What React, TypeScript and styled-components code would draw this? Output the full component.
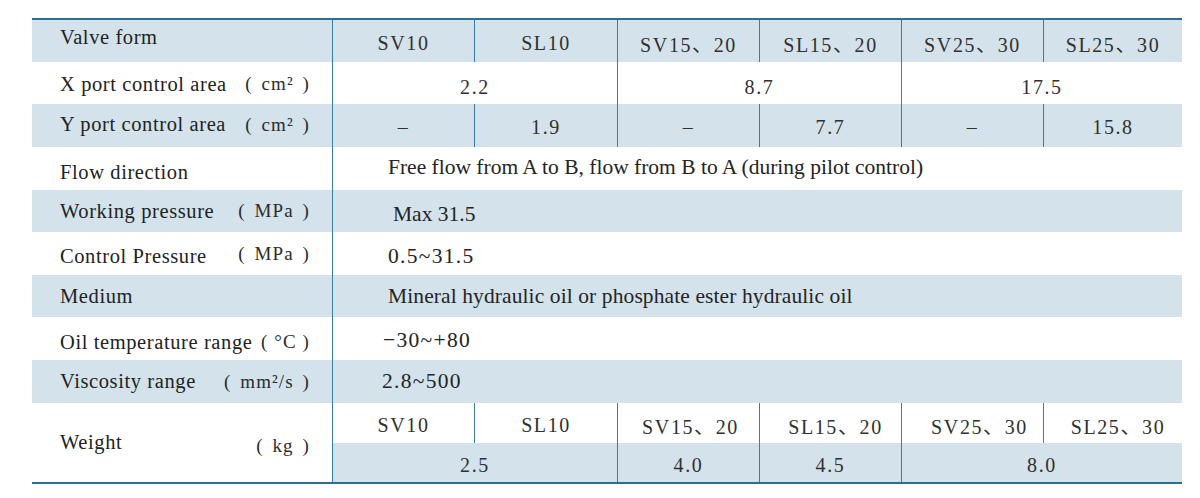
import React from "react";
import styled, { createGlobalStyle } from "styled-components";

const Global = createGlobalStyle`
  html, body { margin: 0; padding: 0; background: #ffffff; }
  body { font-family: "Liberation Serif", "Times New Roman", "Noto Sans CJK SC", serif; color: #2a2a2a; }
`;

const Page = styled.div`
  width: 1200px;
  height: 498px;
  box-sizing: border-box;
  padding: 18px 0 0 32px;
  background: #ffffff;
`;

const Table = styled.div`
  display: grid;
  width: 1150px;
  grid-template-columns: 300px 142px 143px 142px 142px 142px 139px;
  grid-template-rows: 42px 42px 43px 43px 42px 43px 42px 43px 43px 40px 39px;
  border-top: 2px solid #2b6e96;
  border-bottom: 2px solid #2b6e96;
`;

type CellProps = {
  $shade?: boolean;
  $span?: number;
  $rows?: number;
  $dy?: number;
  $dx?: number;
  $ls?: number;
};

const shift = (p: CellProps) => {
  const dy = p.$dy ?? 0;
  return `padding-top: ${Math.max(0, dy * 2)}px; padding-bottom: ${Math.max(0, -dy * 2)}px;`;
};

const LabelCell = styled.div<CellProps>`
  grid-column: 1;
  grid-row: span ${(p) => p.$rows ?? 1};
  display: flex;
  align-items: center;
  justify-content: space-between;
  box-sizing: border-box;
  padding-left: 28px;
  padding-right: 22px;
  ${shift}
  background: ${(p) => (p.$shade ? "#d4e2ec" : "#ffffff")};
  font-size: 20.5px;
  letter-spacing: 0.6px;
  color: #222222;
  white-space: nowrap;
`;

const Unit = styled.span<{ $dy?: number; $tight?: boolean }>`
  font-size: 19px;
  letter-spacing: 1.1px;
  word-spacing: ${(p) => (p.$tight ? 0 : 3)}px;
  color: #2c2c2c;
  position: relative;
  top: ${(p) => p.$dy ?? 0}px;
`;

const ValueCell = styled.div<CellProps>`
  grid-column: span ${(p) => p.$span ?? 1};
  display: flex;
  align-items: center;
  justify-content: center;
  box-sizing: border-box;
  border-left: 1px solid #3a7ea6;
  ${shift}
  padding-left: ${(p) => (p.$dx ?? 0) * 2}px;
  background: ${(p) => (p.$shade ? "#d4e2ec" : "#ffffff")};
  font-size: 20px;
  letter-spacing: 1.6px;
  color: #303030;
  white-space: nowrap;
`;

const TextCell = styled.div<CellProps>`
  grid-column: span 6;
  display: flex;
  align-items: center;
  box-sizing: border-box;
  border-left: 1px solid #3a7ea6;
  ${shift}
  padding-left: ${(p) => p.$dx ?? 55}px;
  background: ${(p) => (p.$shade ? "#d4e2ec" : "#ffffff")};
  font-size: 21.5px;
  letter-spacing: ${(p) => p.$ls ?? 0}px;
  color: #242424;
  white-space: nowrap;
`;

const models = ["SV10", "SL10", "SV15、20", "SL15、20", "SV25、30", "SL25、30"];

type Spec = {
  label: string;
  unit?: string;
  tight?: boolean;
  ldy?: number;
  udy?: number;
  text: string;
  tdy?: number;
  tdx?: number;
  ls?: number;
  shade: boolean;
};

const specs: Spec[] = [
  { label: "Flow direction", ldy: 4, text: "Free flow from A to B, flow from B to A (during pilot control)", tdy: -1.5, shade: false },
  { label: "Working pressure", unit: "( MPa )", text: "Max 31.5", tdy: 3.5, tdx: 60, shade: true },
  { label: "Control Pressure", unit: "( MPa )", ldy: 3, udy: -3, text: "0.5~31.5", tdy: 3, ls: 1.3, shade: false },
  { label: "Medium", text: "Mineral hydraulic oil or phosphate ester hydraulic oil", ls: 0.1, shade: true },
  { label: "Oil temperature range", unit: "( °C )", tight: true, ldy: 3.5, text: "−30~+80", tdy: 1.5, tdx: 50, ls: 1.3, shade: false },
  { label: "Viscosity range", unit: "( mm²/s )", text: "2.8~500", tdx: 49, ls: 1.3, shade: true },
];

const weightTopDx = [0, 0, 2, 5, 7, 5];

export default function App() {
  return (
    <>
      <Global />
      <Page>
        <Table>
          <LabelCell $shade $dy={-4}>
            <span>Valve form</span>
          </LabelCell>
          {models.map((m) => (
            <ValueCell key={m} $shade $dy={2}>
              {m}
            </ValueCell>
          ))}

          <LabelCell $dy={1}>
            <span>X port control area</span>
            <Unit>( cm² )</Unit>
          </LabelCell>
          <ValueCell $span={2} $dy={4.5}>2.2</ValueCell>
          <ValueCell $span={2} $dy={4.5}>8.7</ValueCell>
          <ValueCell $span={2} $dy={4.5}>17.5</ValueCell>

          <LabelCell $shade $dy={-1}>
            <span>Y port control area</span>
            <Unit>( cm² )</Unit>
          </LabelCell>
          {["–", "1.9", "–", "7.7", "–", "15.8"].map((v, i) => (
            <ValueCell key={i} $shade $dy={2}>
              {v}
            </ValueCell>
          ))}

          {specs.map((s) => (
            <React.Fragment key={s.label}>
              <LabelCell $shade={s.shade} $dy={s.ldy}>
                <span>{s.label}</span>
                {s.unit && (
                  <Unit $dy={s.udy} $tight={s.tight}>
                    {s.unit}
                  </Unit>
                )}
              </LabelCell>
              <TextCell $shade={s.shade} $dy={s.tdy} $dx={s.tdx} $ls={s.ls}>
                {s.text}
              </TextCell>
            </React.Fragment>
          ))}

          <LabelCell $rows={2}>
            <span>Weight</span>
            <Unit $dy={3}>( kg )</Unit>
          </LabelCell>
          {models.map((m, i) => (
            <ValueCell key={"w" + m} $dy={2} $dx={weightTopDx[i]}>
              {m}
            </ValueCell>
          ))}
          <ValueCell $shade $span={2} $dy={3}>2.5</ValueCell>
          <ValueCell $shade $dy={3}>4.0</ValueCell>
          <ValueCell $shade $dy={3}>4.5</ValueCell>
          <ValueCell $shade $span={2} $dy={3}>8.0</ValueCell>
        </Table>
      </Page>
    </>
  );
}
